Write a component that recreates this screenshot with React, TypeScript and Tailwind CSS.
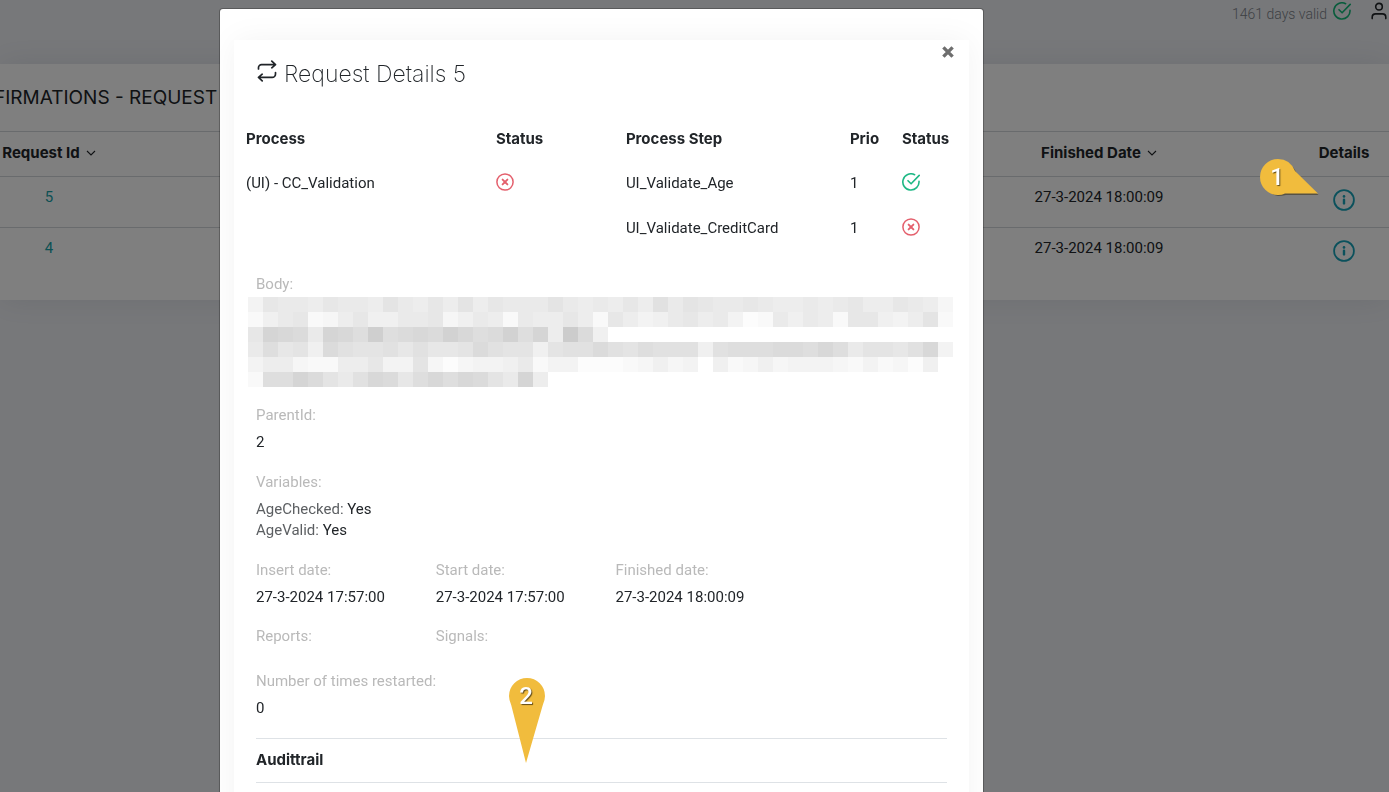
import type { ReactNode } from 'react';

const requests = [
  { id: 5, finished: '27-3-2024 18:00:09' },
  { id: 4, finished: '27-3-2024 18:00:09' },
];

const steps = [
  { process: '(UI) - CC_Validation', failed: true, step: 'UI_Validate_Age', prio: 1, ok: true },
  { process: '', failed: false, step: 'UI_Validate_CreditCard', prio: 1, ok: false },
];

const variables = [
  { name: 'AgeChecked', value: 'Yes' },
  { name: 'AgeValid', value: 'Yes' },
];

// Masked body: one letter per block, a = white, every next letter 3 levels darker
const maskedBody = [
  'eihhgihhgjhgigjgihhhjhghgigkhjihhihgghghiggihgd',
  'cfhicdgiffhhidfhgchggigcigefhighebchfhgciifegjc',
  'ionmhonlqlmnmpnlmplogrmf',
  'hlijfmkjjkikiijmkjjfjkkmkjlkkkfklllmmlnlhjjikne',
  'eggdccggieejdbdeefhceebbbcdfdeafcdfdeeedcecdbfa',
  'cllomjhknmilnlnmjhog',
];

function CheckIcon({ className }: { className: string }) {
  return (
    <svg viewBox="0 0 18 18" fill="none" stroke="currentColor" strokeWidth="1.6" className={className}>
      <path d="M12.6 1.7A8.1 8.1 0 1 0 17 8.2" strokeLinecap="round" />
      <path d="M6 7.7l3.1 3.1 8.1-8.4" strokeLinecap="round" strokeLinejoin="round" />
    </svg>
  );
}

function ErrorIcon({ className }: { className: string }) {
  return (
    <svg viewBox="0 0 18 18" fill="none" stroke="currentColor" className={className}>
      <circle cx="9" cy="9" r="8.1" strokeWidth="1.5" />
      <path d="M6.6 6.6l4.8 4.8M11.4 6.6l-4.8 4.8" strokeWidth="1.9" strokeLinecap="round" />
    </svg>
  );
}

function InfoIcon() {
  return (
    <svg viewBox="0 0 22 22" fill="none" stroke="currentColor" strokeWidth="1.8" className="mx-auto block size-[22px]">
      <circle cx="11" cy="11" r="9.9" />
      <path d="M11 10.8v3.6" strokeWidth="2.4" strokeLinecap="round" />
      <circle cx="11" cy="7.4" r="1.3" fill="currentColor" stroke="none" />
    </svg>
  );
}

function UserIcon() {
  return (
    <svg viewBox="0 0 16 18" fill="none" stroke="currentColor" strokeWidth="1.6" className="h-[18px] w-4">
      <circle cx="8" cy="4.7" r="3.3" />
      <path d="M1.2 16.6v-1.4c0-2 1.5-3.3 3.4-3.3h6.8c1.9 0 3.4 1.3 3.4 3.3v1.4" strokeLinecap="round" />
    </svg>
  );
}

function LoopIcon() {
  return (
    <svg
      viewBox="0 0 20 22"
      fill="none"
      stroke="currentColor"
      strokeWidth="1.7"
      strokeLinecap="round"
      strokeLinejoin="round"
      className="h-[22px] w-5"
    >
      <path d="M1.5 9V7.6a3 3 0 0 1 3-3H18M14.8 1.2L18.5 4.6l-3.7 3.2" />
      <path d="M18.5 12.6V14a3.4 3.4 0 0 1-3.4 3.4H2M5.2 14.2l-3.7 3.2 3.7 3.4" />
    </svg>
  );
}

function SortIcon() {
  return (
    <svg viewBox="0 0 10 8" fill="none" stroke="currentColor" className="ml-1.5 inline h-2 w-2.5 align-baseline">
      <path d="M1 1l4 4 4-4" strokeWidth="1.1" />
    </svg>
  );
}

function Field({ label, children }: { label: string; children?: ReactNode }) {
  return (
    <div>
      <dt className="text-[#b9b9b9]">{label}</dt>
      {children && <dd className="mt-1.5 text-[#212529]">{children}</dd>}
    </div>
  );
}

function RequestsPage() {
  return (
    <div className="min-h-screen overflow-hidden bg-[#eff1f5]">
      <header className="flex h-16 items-start justify-end pt-0.5 pr-0.5 text-[#212529]">
        <span className="text-sm leading-6 font-light text-[#7c8289]">1461 days valid</span>
        <CheckIcon className="ml-1.5 size-[18px] text-[#12b878]" />
        <a href="#account" aria-label="Account" className="ml-5">
          <UserIcon />
        </a>
      </header>

      <main className="bg-white pb-[21px] text-[15px] leading-[21px] text-[#212529] shadow-[0_0_30px_rgba(70,80,110,0.12)]">
        <h1 className="-ml-1.5 py-5 font-[Inter,sans-serif] text-[19px] leading-[27px] font-normal whitespace-nowrap">
          FIRMATIONS - REQUEST
        </h1>
        <table className="w-full table-fixed text-center">
          <thead className="font-[Inter,sans-serif]">
            <tr className="h-[45px] border-t border-[#d3d6da] align-middle">
              <th className="w-[98px] pb-1 font-bold whitespace-nowrap">
                Request Id
                <SortIcon />
              </th>
              <th />
              <th className="w-[400px] pb-1 font-bold">
                Finished Date
                <SortIcon />
              </th>
              <th className="w-[90px] pb-1 font-bold">Details</th>
            </tr>
          </thead>
          <tbody>
            {requests.map((r) => (
              <tr key={r.id} className="h-[51px] border-t border-[#d3d6da] align-top">
                <td className="pt-2.5">
                  <a href={`#request-${r.id}`} className="text-[#17a2a8]">
                    {r.id}
                  </a>
                </td>
                <td />
                <td className="pt-2.5">{r.finished}</td>
                <td className="pt-3">
                  <button type="button" aria-label="Details" className="block w-full text-[#17a2b8]">
                    <InfoIcon />
                  </button>
                </td>
              </tr>
            ))}
          </tbody>
        </table>
      </main>
    </div>
  );
}

function ProcessTable() {
  return (
    <table className="w-full table-fixed text-left text-[#212529]">
      <thead className="font-[Inter,sans-serif]">
        <tr className="h-[43px]">
          <th className="w-[34%] pb-0.5 pl-3 font-bold">Process</th>
          <th className="w-[130px] pb-0.5 pl-3 font-bold">Status</th>
          <th className="w-56 pb-0.5 pl-3 font-bold">Process Step</th>
          <th className="w-[52px] pb-0.5 pl-3 font-bold">Prio</th>
          <th className="pb-0.5 pl-3 font-bold">Status</th>
        </tr>
      </thead>
      <tbody>
        {steps.map((s) => (
          <tr key={s.step} className="h-[45px]">
            <td className="pl-3">{s.process}</td>
            <td className="pl-3">{s.failed && <ErrorIcon className="mb-1 size-[18px] text-[#e4606d]" />}</td>
            <td className="pl-3">{s.step}</td>
            <td className="pl-3">{s.prio}</td>
            <td className="pl-3">
              {s.ok ? (
                <CheckIcon className="mb-1 size-[18px] text-[#1eb885]" />
              ) : (
                <ErrorIcon className="mb-1 size-[18px] text-[#e4606d]" />
              )}
            </td>
          </tr>
        ))}
      </tbody>
    </table>
  );
}

function MaskedBody() {
  return (
    <div className="mt-0.5 -mr-1.5 -ml-2 grid grid-cols-[repeat(47,minmax(0,1fr))]">
      {maskedBody.flatMap((row, y) =>
        row
          .padEnd(47, 'a')
          .split('')
          .map((c, x) => {
            const v = 255 - 3 * (c.charCodeAt(0) - 97);
            return <div key={`${y}-${x}`} className="h-[15px]" style={{ backgroundColor: `rgb(${v},${v},${v})` }} />;
          }),
      )}
    </div>
  );
}

function RequestDialog() {
  return (
    <div className="fixed inset-0 overflow-hidden bg-black/50 pt-[9px] pr-[406px] pl-[220px]">
      <div
        role="dialog"
        aria-labelledby="dialog-title"
        className="min-h-full rounded-[3px] bg-white px-3.5 pt-[31px] shadow-[0_0_0_1px_rgba(0,0,0,0.25)]"
      >
        <section className="min-h-screen bg-white text-[15px] leading-[21px] shadow-[0_0_30px_rgba(0,0,0,0.05)]">
          <div className="flex h-[78px] items-start justify-between pr-[15px] pl-[23px]">
            <h2
              id="dialog-title"
              className="flex items-start gap-[7px] pt-5 font-[Inter,sans-serif] text-[23px] leading-7 font-extralight text-[#212529]"
            >
              <LoopIcon />
              Request Details 5
            </h2>
            <button type="button" aria-label="Close" className="mt-1.5 text-[#6e6e6e]">
              <svg viewBox="0 0 12 12" stroke="currentColor" strokeWidth="3.4" className="size-3">
                <path d="M1.4 1.4l9.2 9.2M10.6 1.4l-9.2 9.2" />
              </svg>
            </button>
          </div>

          <ProcessTable />

          <div className="px-[22px] pt-[23px]">
            <dl>
              <dt className="text-[#b9b9b9]">Body:</dt>
              <dd>
                <MaskedBody />
              </dd>
            </dl>
            <dl className="mt-[18px] flex flex-col gap-[19px]">
              <Field label="ParentId:">2</Field>
              <Field label="Variables:">
                {variables.map((v) => (
                  <div key={v.name}>
                    <span className="text-[#5c5f62]">{v.name}:</span> {v.value}
                  </div>
                ))}
              </Field>
            </dl>
            <dl className="mt-[19px] -mr-7 grid grid-cols-4 gap-y-[18px]">
              <Field label="Insert date:">27-3-2024 17:57:00</Field>
              <Field label="Start date:">27-3-2024 17:57:00</Field>
              <Field label="Finished date:">27-3-2024 18:00:09</Field>
              <div />
              <Field label="Reports:" />
              <Field label="Signals:" />
            </dl>
            <dl className="mt-6">
              <Field label="Number of times restarted:">0</Field>
            </dl>
            <h3 className="mt-[19px] border-y border-[#dee2e6] pt-2.5 pb-3 font-[Inter,sans-serif] font-bold text-[#212529]">
              Audittrail
            </h3>
          </div>
        </section>
      </div>
    </div>
  );
}

function Callouts() {
  const digit =
    'absolute top-0 left-0 w-[34px] text-center font-[Roboto,sans-serif] text-2xl leading-9 font-medium text-white [text-shadow:1px_1px_1px_rgba(0,0,0,0.6)]';
  return (
    <>
      <div className="pointer-events-none fixed top-[159px] right-[70px] h-10 w-[59px]">
        <svg viewBox="0 0 59 40" className="size-full">
          <path
            d="M18 1.5A18 18 0 0 0 18 37Q22 37 26 36H58.5L36.5 14Q31 1.5 18 1.5Z"
            fill="#3a3420"
            opacity="0.6"
          />
          <path d="M18 0A18 18 0 0 0 18 36Q22 36 25 34.5H58L35 12Q30 0 18 0Z" fill="#f1bc3d" />
        </svg>
        <span className={digit}>1</span>
      </div>
      <div className="pointer-events-none fixed top-[678px] left-[509px] h-[86px] w-9">
        <svg viewBox="0 0 36 86" className="size-full">
          <path d="M18 0A18 18 0 0 0 0 18Q0 22 2.2 27L17 85L33.8 27Q36 22 36 18A18 18 0 0 0 18 0Z" fill="#f1bc3d" />
        </svg>
        <span className={digit}>2</span>
      </div>
    </>
  );
}

export default function App() {
  return (
    <div className="font-[Roboto,sans-serif]">
      <RequestsPage />
      <RequestDialog />
      <Callouts />
    </div>
  );
}
